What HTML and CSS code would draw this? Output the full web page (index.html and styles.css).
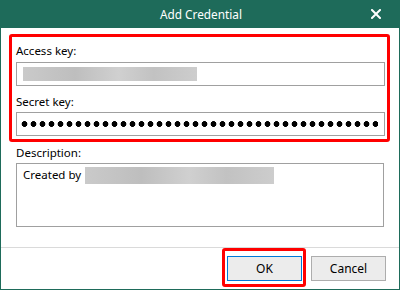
FILE: index.html
```html
<!DOCTYPE html>
<html lang="en">
<head>
    <meta charset="UTF-8">
    <title>Add Credential</title>
    <link rel="stylesheet" href="styles.css">
</head>
<body>

<div class="window">
    <!-- Title bar -->
    <div class="titlebar">
        <span></span>
        <span class="title">Add Credential</span>
        <svg class="close" width="10" height="10" viewBox="0 0 10 10">
            <path d="M1 1 L9 9 M9 1 L1 9" stroke="#fff" stroke-width="2" stroke-linecap="square"/>
        </svg>
    </div>

    <div class="content">
        <!-- Keys (highlighted) -->
        <div class="highlight">
            <div class="label">Access key:</div>
            <div class="field"><span class="blur blur-key"></span></div>

            <div class="label label-secret">Secret key:</div>
            <div class="field"><span class="dots"></span></div>
        </div>

        <div class="label label-desc">Description:</div>
        <div class="textarea">
            <span class="desc-text">Created by</span><span class="blur blur-desc"></span>
        </div>
    </div>

    <!-- Buttons -->
    <div class="footer">
        <div class="highlight-ok">
            <button class="btn btn-default">OK</button>
        </div>
        <button class="btn btn-cancel">Cancel</button>
    </div>
</div>

</body>
</html>
```

FILE: styles.css
```css
html, body {
    margin: 0;
    padding: 0;
}

body {
    width: 400px;
    height: 290px;
    font-family: "Noto Sans", "Open Sans", sans-serif;
    font-size: 11.5px;
    color: #000;
    background: #fff;
}

.window {
    width: 400px;
    height: 290px;
    box-sizing: border-box;
    border: 1px solid #1e6b5a;
    border-top: none;
    display: flex;
    flex-direction: column;
}

.titlebar {
    height: 28px;
    margin: 0 -1px;
    background-color: #1e6b5a;
    color: #fff;
    display: grid;
    grid-template-columns: 1fr auto 1fr;
    align-items: center;
}

.title {
    line-height: 28px;
    font-size: 11.8px;
    padding-left: 2px;
}

.close {
    justify-self: end;
    margin-right: 19px;
    margin-top: -1px;
}

.content {
    flex: 1;
}

.highlight {
    margin: 6px 9px 0 8px;
    border: 3px solid #ff0000;
    border-radius: 3px;
    padding: 6px 2px 3px 4px;
}

.label {
    line-height: 16px;
    height: 16px;
    margin-bottom: 3px;
}

.label-secret {
    margin-top: 8px;
    margin-bottom: 2px;
}

.label-desc {
    margin: 3px 0 2px 15px;
}

.field {
    height: 24px;
    box-sizing: border-box;
    border: 1px solid #a0a0a0;
    padding: 4px 6px;
    display: flex;
    align-items: center;
}

.blur {
    display: inline-block;
    background: linear-gradient(90deg, #cacaca, #bebebe 30%, #d0d0d0 55%, #c2c2c2 75%, #cdcdcd);
    filter: blur(0.6px);
}

.blur-key {
    width: 174px;
    height: 14px;
}

.dots {
    flex: 1;
    height: 10px;
    margin-left: -3px;
    background-image: radial-gradient(circle at 4.5px 5px, #000 2.6px, transparent 3.2px);
    background-size: 9px 10px;
    background-repeat: repeat-x;
}

.textarea {
    margin-left: 15px;
    width: 368px;
    height: 64px;
    box-sizing: border-box;
    border: 1px solid #a0a0a0;
    padding: 2px 6px;
    display: flex;
    align-items: flex-start;
}

.desc-text {
    line-height: 18px;
    margin-right: 4px;
}

.blur-desc {
    width: 189px;
    height: 17px;
    margin-top: 1px;
}

.footer {
    height: 41px;
    border-top: 1px solid #dadada;
    display: flex;
    justify-content: flex-end;
    align-items: flex-start;
    padding-right: 13px;
}

.highlight-ok {
    border: 3px solid #ff0000;
    border-radius: 3px;
    padding: 5px 1px 3px 2px;
    margin-right: 5px;
}

.btn {
    width: 75px;
    height: 25px;
    box-sizing: border-box;
    font-family: "Noto Sans", "Open Sans", sans-serif;
    font-size: 12px;
    color: #000;
    background-color: #ececec;
    border: 1px solid #adadad;
    padding: 0;
    display: block;
}

.btn-default {
    border-color: #0078d7;
}

.btn-cancel {
    margin-top: 8px;
}
```
